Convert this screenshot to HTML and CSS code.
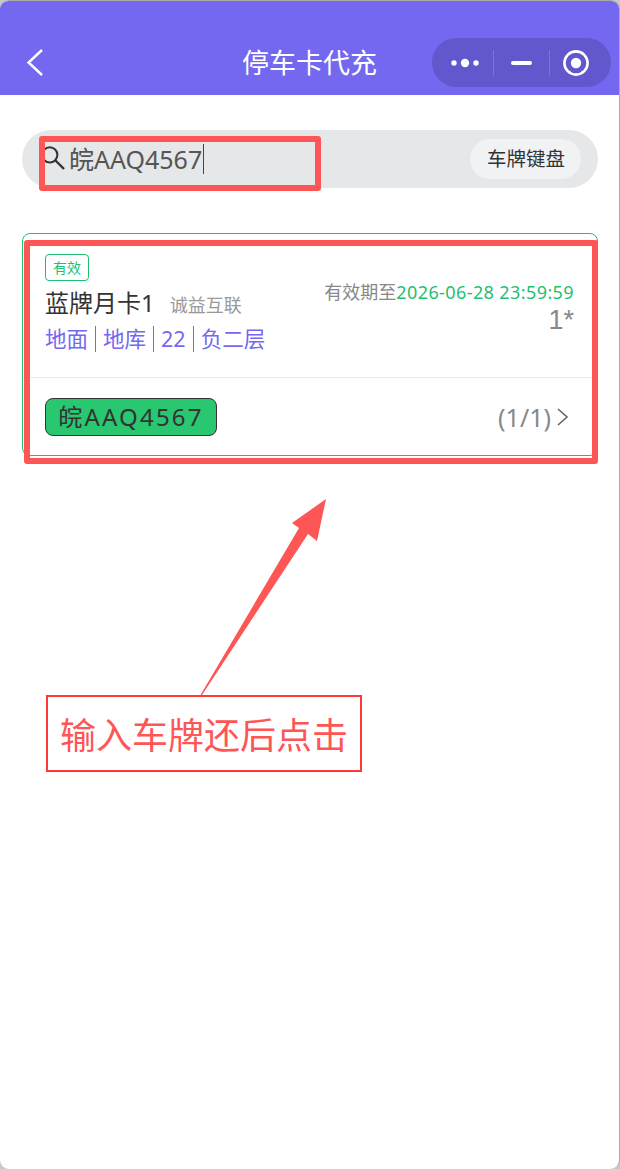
FILE: index.html
```html
<!DOCTYPE html>
<html lang="zh-CN">
<head>
    <meta charset="UTF-8">
    <meta name="viewport" content="width=device-width, initial-scale=1.0">
    <title>停车卡代充</title>
    <link rel="stylesheet" href="styles.css">
</head>
<body>
    <div class="window">
        <div class="nav">
            <svg class="nav-back" width="18" height="30" viewBox="0 0 18 30">
                <path d="M16 2 L2.5 14.5 L16 27" fill="none" stroke="#fff" stroke-width="2.4"/>
            </svg>
            <div class="nav-title">停车卡代充</div>
            <div class="capsule">
                <svg class="capsule-more" width="28" height="12" viewBox="0 0 28 12">
                    <circle cx="3" cy="6" r="2.7" fill="#fff"/>
                    <circle cx="14" cy="6" r="4.2" fill="#fff"/>
                    <circle cx="25" cy="6" r="2.7" fill="#fff"/>
                </svg>
                <span class="capsule-line"></span>
                <span class="capsule-min"></span>
                <span class="capsule-line"></span>
                <svg class="capsule-target" width="26" height="26" viewBox="0 0 26 26">
                    <circle cx="13" cy="13" r="11.6" fill="none" stroke="#fff" stroke-width="2.6"/>
                    <circle cx="13" cy="13" r="5.2" fill="#fff"/>
                </svg>
            </div>
        </div>

        <div class="content">
            <div class="search">
                <svg class="search-icon" width="24" height="24" viewBox="0 0 24 24">
                    <circle cx="8.8" cy="8.8" r="7.6" fill="none" stroke="#333" stroke-width="2"/>
                    <path d="M14 14 L23 23" fill="none" stroke="#333" stroke-width="2.4"/>
                </svg>
                <div class="search-text">皖AAQ4567</div>
                <span class="caret"></span>
                <div class="key-btn">车牌键盘</div>
            </div>

            <div class="card">
                <div class="card-top">
                    <div class="card-info">
                        <span class="tag">有效</span>
                        <div class="card-name">
                            <span class="name">蓝牌月卡1</span>
                            <span class="owner">诚益互联</span>
                        </div>
                        <div class="places">
                            <span>地面</span>
                            <span>地库</span>
                            <span>22</span>
                            <span>负二层</span>
                        </div>
                    </div>
                    <div class="card-side">
                        <div class="expire">有效期至<em>2026-06-28 23:59:59</em></div>
                        <div class="count">1*</div>
                    </div>
                </div>
                <div class="card-bottom">
                    <span class="plate">皖AAQ4567</span>
                    <span class="pages">(1/1)</span>
                    <svg width="13" height="20" viewBox="0 0 13 20">
                        <path d="M2 2 L11 10 L2 18" fill="none" stroke="#666" stroke-width="1.6"/>
                    </svg>
                </div>
            </div>
        </div>

        <!-- screenshot annotations -->
        <div class="mark mark-search"></div>
        <div class="mark mark-card"></div>
        <svg class="arrow" width="130" height="198" viewBox="0 0 130 198">
            <polygon points="0.5,197 2,197 108,36 117,43 126,1 92,25 99,30" fill="#fe5555"/>
        </svg>
        <div class="note">输入车牌还后点击</div>
    </div>
</body>
</html>
```

FILE: styles.css
```css
* {
    box-sizing: border-box;
}
html, body {
    margin: 0;
    height: 100%;
}
body {
    background-color: #c8c8c8;
    font-family: "Noto Sans", "Noto Sans CJK SC", sans-serif;
}
.window {
    position: relative;
    height: 1169px;
    overflow: hidden;
    border-radius: 9px;
    border-top: 1px solid #aaa;
    border-right: 1px solid #aaa;
    background-color: #fff;
}
.nav {
    position: relative;
    display: flex;
    align-items: center;
    justify-content: center;
    height: 94px;
    padding-top: 30px;
    background-color: #7468f0;
}
.nav-back {
    position: absolute;
    left: 26px;
    top: 47px;
}
.nav-title {
    margin-top: -3px;
    color: #fff;
    font-size: 27px;
}
.capsule {
    position: absolute;
    left: 432px;
    top: 37px;
    display: flex;
    align-items: center;
    width: 179px;
    height: 49px;
    padding-left: 19px;
    border-radius: 25px;
    background-color: #6257cd;
}
.capsule-line {
    width: 1px;
    height: 26px;
    background-color: #7d73dc;
}
.capsule-more {
    margin-right: 14px;
}
.capsule-min {
    width: 21px;
    height: 4px;
    margin: 0 17px;
    border-radius: 2px;
    background-color: #fff;
}
.capsule-target {
    margin-left: 13px;
}
.content {
    padding: 35px 21px 0 22px;
}
.search {
    display: flex;
    align-items: center;
    height: 58px;
    padding: 0 17px 0 19px;
    border-radius: 29px;
    background-color: #e6e7e9;
}
.search-icon {
    margin-top: -2px;
}
.search-text {
    margin-top: -3px;
    margin-left: 4px;
    color: #555;
    font-size: 25px;
}
.caret {
    width: 1px;
    height: 30px;
    margin-left: 1px;
    background-color: #444;
}
.key-btn {
    margin-left: auto;
    padding: 0 16px 0 17px;
    border-radius: 20px;
    background-color: #f1f2f4;
    color: #333;
    font-size: 19.5px;
    line-height: 40px;
}
.card {
    height: 223px;
    margin-top: 45px;
    border: 1px solid #1fc072;
    border-radius: 8px;
    overflow: hidden;
}
.card-top {
    display: flex;
    justify-content: space-between;
    height: 144px;
    padding: 20px 23px 0 22px;
    border-bottom: 1px solid #e8e8e8;
}
.tag {
    display: block;
    width: 44px;
    height: 27px;
    border: 1px solid #1fc072;
    border-radius: 4px;
    color: #1fc072;
    font-size: 14px;
    line-height: 25px;
    text-align: center;
}
.card-name {
    display: flex;
    align-items: baseline;
    height: 36px;
    margin-top: 5px;
}
.name {
    color: #333;
    font-size: 24px;
    line-height: 34px;
}
.owner {
    margin-left: 15px;
    color: #999;
    font-size: 18px;
}
.places {
    display: flex;
    margin-top: 4px;
    color: #7468f0;
    font-size: 21.5px;
    line-height: 26px;
}
.places span {
    padding: 0 7px;
    border-left: 1px solid #7468f0;
}
.places span:first-child {
    padding: 0 7px 0 0;
    border-left: none;
}
.card-side {
    padding-top: 24px;
    text-align: right;
}
.expire {
    color: #888;
    font-size: 18px;
    line-height: 28px;
}
.expire em {
    color: #1fc072;
    font-style: normal;
    letter-spacing: 0.4px;
}
.count {
    color: #888;
    font-family: "Liberation Sans", sans-serif;
    font-size: 27px;
    line-height: 28px;
}
.card-bottom {
    display: flex;
    align-items: center;
    gap: 5px;
    height: 78px;
    padding: 0 28px 0 22px;
}
.plate {
    display: flex;
    align-items: center;
    justify-content: center;
    width: 172px;
    height: 38px;
    margin-right: auto;
    padding-bottom: 3px;
    border: 1px solid #333;
    border-radius: 8px;
    background-color: #29c76f;
    color: #333;
    font-size: 24px;
    letter-spacing: 2.2px;
}
.pages {
    color: #888;
    font-size: 25px;
}
.mark {
    position: absolute;
    border: 6px solid #fe5555;
    border-radius: 3px;
}
.mark-search {
    left: 39px;
    top: 135px;
    width: 282px;
    height: 55px;
}
.mark-card {
    left: 24px;
    top: 239px;
    width: 574px;
    height: 224px;
}
.arrow {
    position: absolute;
    left: 200px;
    top: 497px;
}
.note {
    position: absolute;
    left: 46px;
    top: 694px;
    width: 316px;
    height: 77px;
    border: 2px solid #ff3838;
    color: #fe5555;
    font-size: 36px;
    line-height: 78px;
    text-align: center;
}
```
